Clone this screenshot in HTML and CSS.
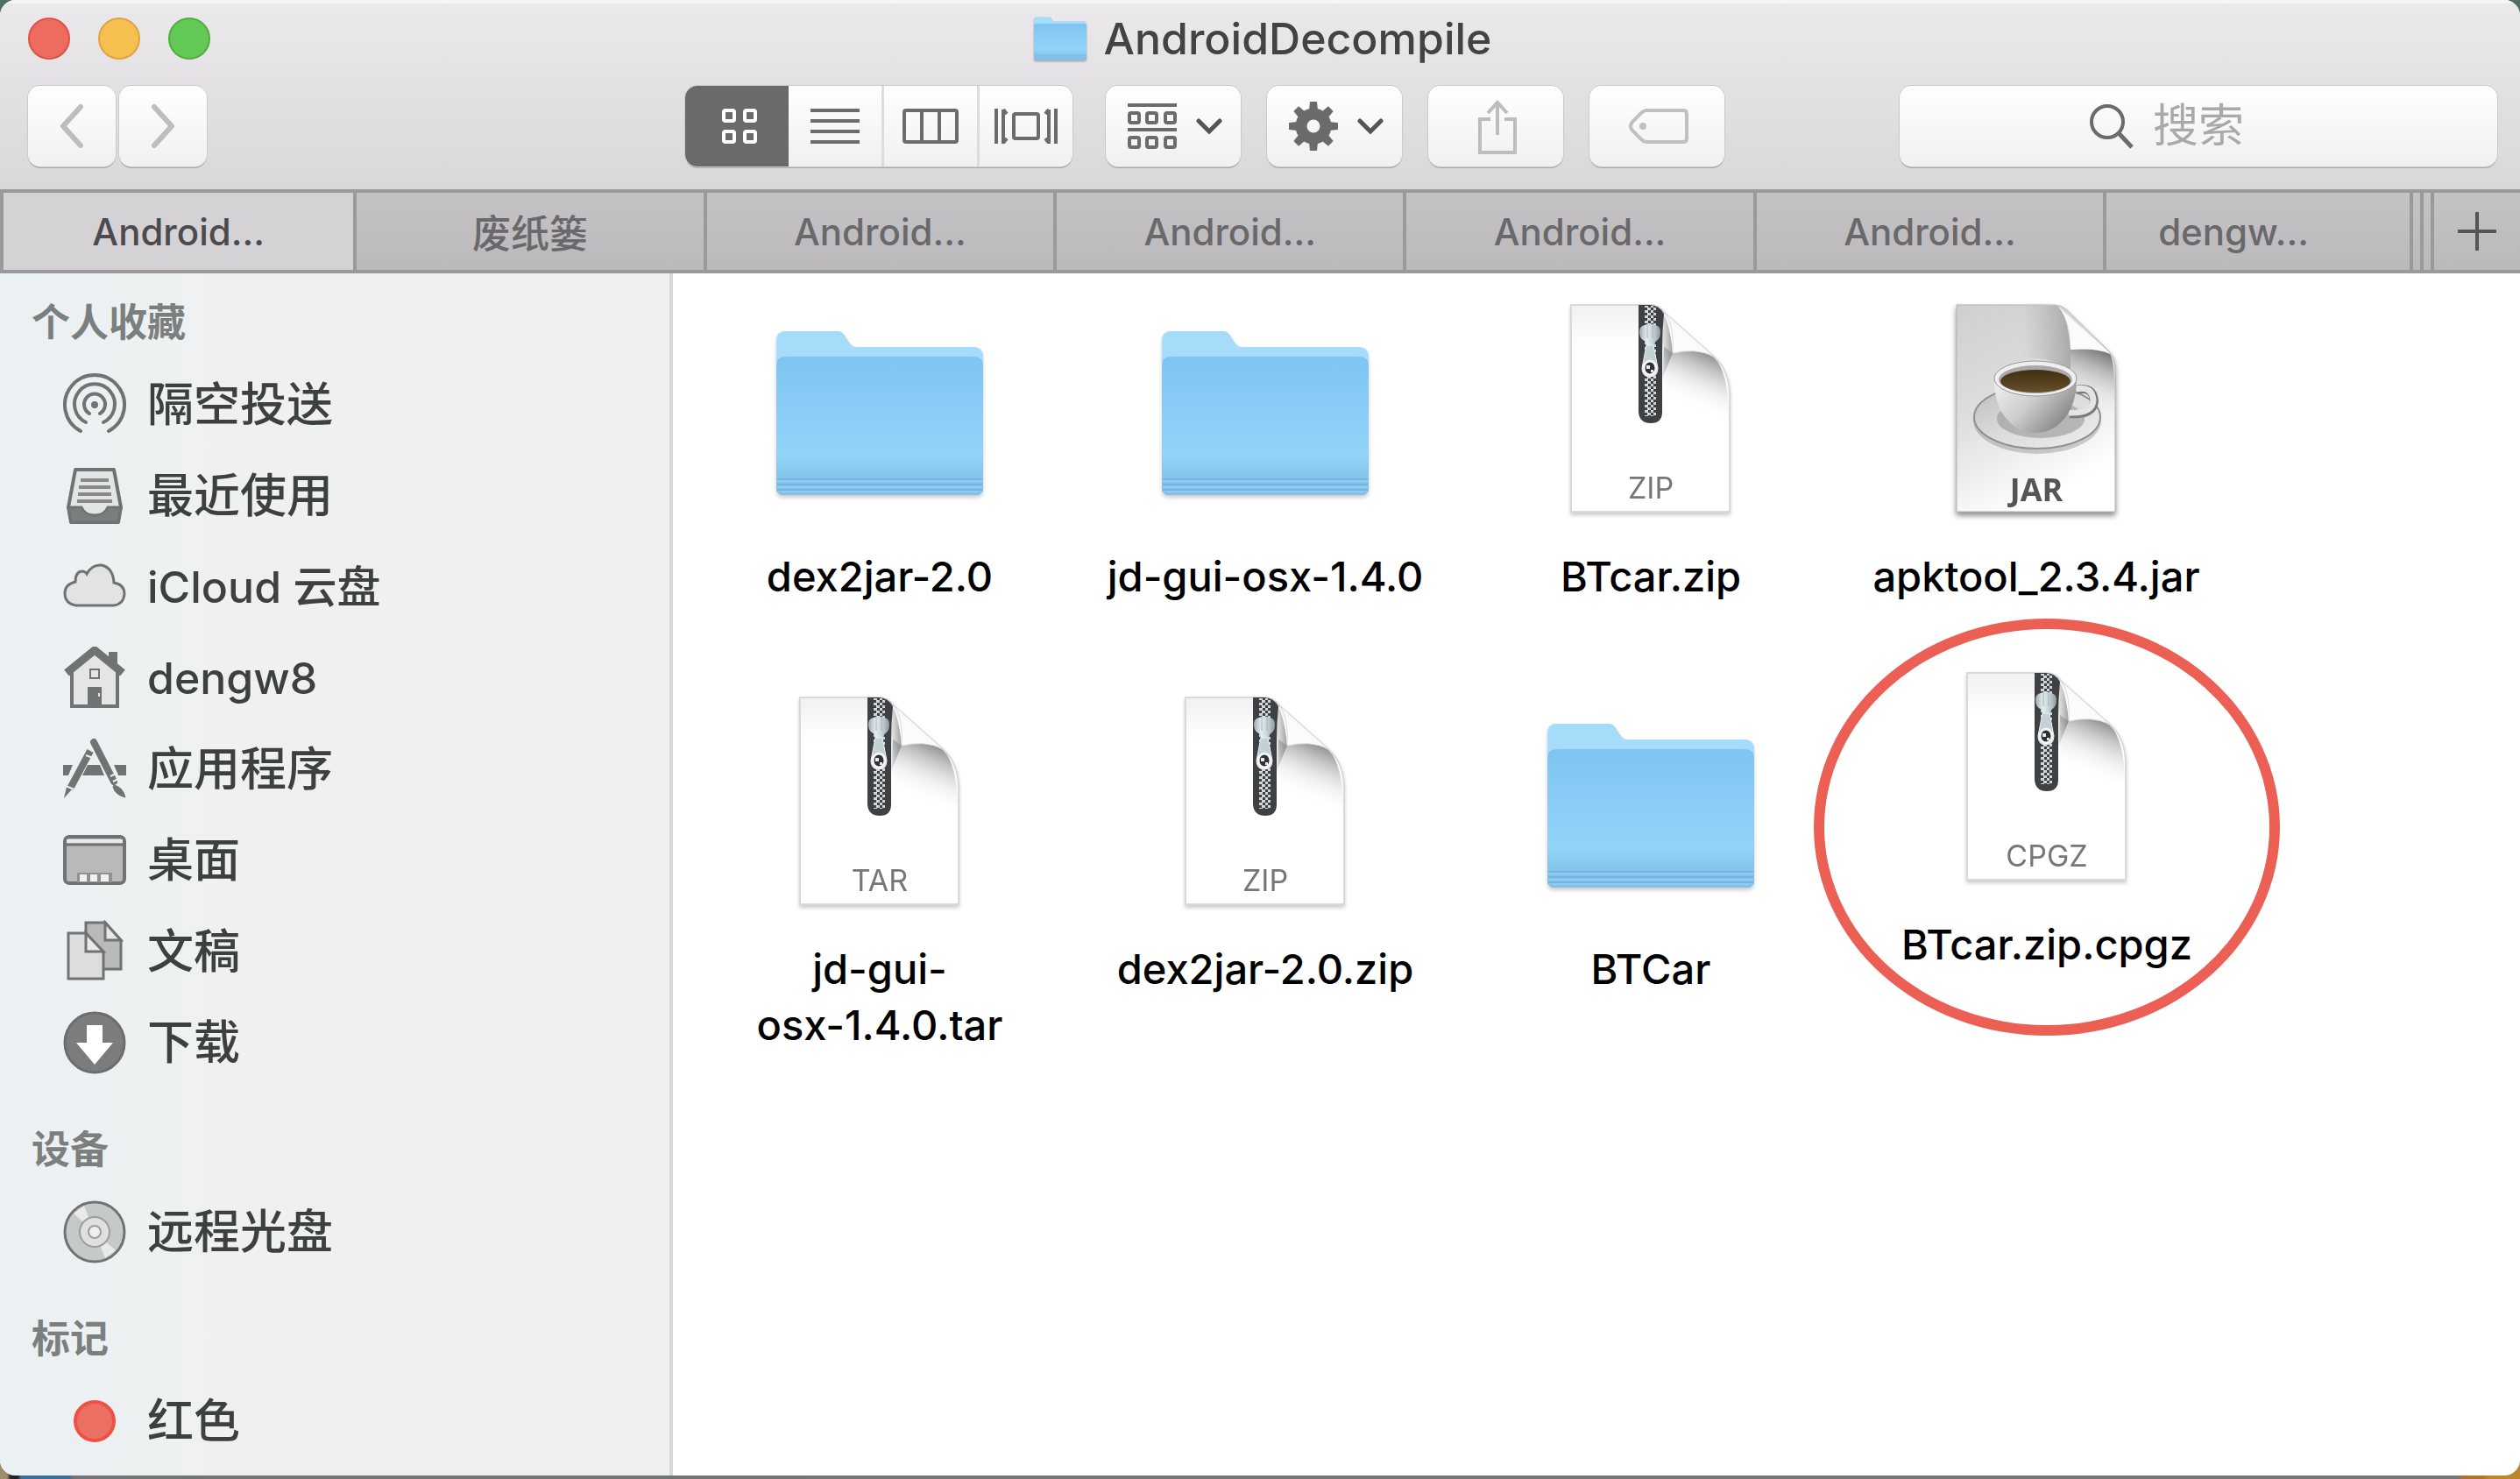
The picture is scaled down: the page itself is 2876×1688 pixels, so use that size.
FILE: index.html
```html
<!DOCTYPE html>
<html lang="zh-CN">
<head>
<meta charset="utf-8">
<title>AndroidDecompile</title>
<link rel="stylesheet" href="styles.css">
</head>
<body>
<svg class="defs" aria-hidden="true">
  <defs>
    <linearGradient id="folder-front" x1="0" y1="0" x2="0" y2="1">
      <stop offset="0" stop-color="#7fc5f2"/><stop offset=".4" stop-color="#8acdf7"/>
      <stop offset=".72" stop-color="#91d4f7"/><stop offset=".86" stop-color="#86c6ec"/><stop offset="1" stop-color="#82c0e8"/>
    </linearGradient>
    <linearGradient id="page-shade" x1="0" y1="0" x2="0" y2="1">
      <stop offset="0" stop-color="#f1f1f1"/><stop offset=".2" stop-color="#fff"/>
    </linearGradient>
    <linearGradient id="jar-page" x1="0" y1="0" x2=".4" y2="1">
      <stop offset="0" stop-color="#cfcfcf"/><stop offset=".5" stop-color="#dedede"/><stop offset="1" stop-color="#fff"/>
    </linearGradient>
    <linearGradient id="curl-shade" gradientUnits="userSpaceOnUse" x1="158" y1="50" x2="130" y2="116">
      <stop offset="0" stop-color="#7c7c7c"/><stop offset=".3" stop-color="#b4b4b4" stop-opacity=".8"/><stop offset=".6" stop-color="#ddd" stop-opacity=".5"/><stop offset="1" stop-color="#fff" stop-opacity="0"/>
    </linearGradient>
    <linearGradient id="side-shade" x1="0" y1="0" x2="1" y2="0">
      <stop offset="0" stop-color="#888" stop-opacity="0"/><stop offset="1" stop-color="#777" stop-opacity=".7"/>
    </linearGradient>
    <linearGradient id="curl-paper" x1="0" y1="1" x2="1" y2="0">
      <stop offset="0" stop-color="#fff"/><stop offset=".5" stop-color="#fafafa"/><stop offset="1" stop-color="#d0d0d0"/>
    </linearGradient>
    <linearGradient id="metal" x1="0" y1="0" x2="1" y2="0">
      <stop offset="0" stop-color="#9eabb1"/><stop offset=".35" stop-color="#e4edf0"/><stop offset=".65" stop-color="#c5d3d9"/><stop offset="1" stop-color="#8f9ba1"/>
    </linearGradient>
    <linearGradient id="cup-body" x1="0" y1="0" x2="1" y2=".6">
      <stop offset="0" stop-color="#f1f1f1"/><stop offset=".5" stop-color="#cfcfcf"/><stop offset="1" stop-color="#858585"/>
    </linearGradient>
    <linearGradient id="saucer-fill" x1="0" y1="0" x2="1" y2="1">
      <stop offset="0" stop-color="#bdbdbd"/><stop offset=".5" stop-color="#dcdcdc"/><stop offset="1" stop-color="#eee"/>
    </linearGradient>
    <linearGradient id="coffee" x1="0" y1="0" x2="0" y2="1">
      <stop offset="0" stop-color="#3f2f12"/><stop offset="1" stop-color="#66502a"/>
    </linearGradient>
    <pattern id="teeth" width="16" height="6" patternUnits="userSpaceOnUse" x="83" y="0">
      <path d="M1 0h4v3h-4zM8 0h3v3h-3zM4 3h4v3h-4zM11 3h3v3h-3z" fill="#ced6d9"/>
    </pattern>
  </defs>
  <symbol id="folder" viewBox="0 0 256 256">
    <path d="M10 52q0-12 10-12h60q5 0 8 5l6 9q3 4 8 4h133q11 0 11 12v150H10z" fill="#a4dcfa"/>
    <path d="M10 80q0-11 11-11h214q11 0 11 11v139q0 8-8 8H18q-8 0-8-8z" fill="url(#folder-front)"/>
    <path d="M11 209h234M11 215h234M11 221h234" stroke="#72b3df" stroke-width="2"/>
    <path d="M11 211h234M11 218h234M12 223h232" stroke="#9bd2f1" stroke-width="1"/>
  </symbol>
  <symbol id="archive" viewBox="0 0 256 256">
    <g transform="translate(37 10)">
      <path d="M0 0H90Q101 0 108 10L162 58Q181 74 181 104V236H0z" fill="url(#page-shade)" stroke="#d9d9d9" stroke-width="2"/>
      <path d="M116 55Q146 48 163 60Q180 76 180 128L106 112V48z" fill="url(#curl-shade)"/>
      <path d="M100 4Q112 12 116 55L104 84V4z" fill="url(#side-shade)"/>
      <path d="M77 0h13q10 0 16 10q-2 20-2 40v72q0 13-13 13t-14-13z" fill="#3f4043"/>
      <path d="M83 1h15v126H83z" fill="url(#teeth)"/>
      <path d="M108 10L162 58Q142 49 116 55Q118 24 108 10z" fill="url(#curl-paper)" stroke="#ddd" stroke-width="1"/>
      <path d="M78 31q0-7 6-8q6-3 12 0q6 1 6 8q0 8-6 11l-1 6h-9l-1-6q-7-3-7-11z" fill="url(#metal)"/>
      <path d="M87 22v16M93 22v16" stroke="#a3b0b6" stroke-width="1"/>
      <path d="M86 46h8l5 26q0 10-9 10t-9-10z" fill="#c3d0d5" stroke="#eef3f5" stroke-width="1"/>
      <ellipse cx="90" cy="72" rx="7" ry="8" fill="#2f3033" stroke="#f4f6f7" stroke-width="3"/>
      <path d="M86 69h4v4h-4zM91 74h3v3h-3z" fill="#e6ebed"/>
    </g>
  </symbol>
  <symbol id="jar" viewBox="0 0 256 256">
    <g transform="translate(37 10)">
      <path d="M0 0H112Q120 0 126 6L174 53Q181 60 181 74V236H0z" fill="url(#jar-page)" stroke="#b5b5b5" stroke-width="1"/>
      <path d="M75 1H114Q126 6 130 51V75Q110 60 75 60z" fill="url(#side-shade)" opacity=".7"/>
      <path d="M130 51Q156 48 175 56Q181 62 181 128L130 100z" fill="url(#curl-shade)"/>
      <path d="M116 2L175 55Q160 49 130 51Q131 20 116 2z" fill="url(#curl-paper)"/>
      <ellipse cx="92" cy="132" rx="73" ry="38" fill="#777" opacity=".35"/>
      <ellipse cx="92" cy="128" rx="72" ry="36" fill="url(#saucer-fill)" stroke="#909090" stroke-width="2"/>
      <ellipse cx="96" cy="130" rx="50" ry="22" fill="#9d9d9d" opacity=".65"/>
      <path d="M136 97q20-5 21 13q-1 16-28 14" fill="none" stroke="#7b7b7b" stroke-width="10"/>
      <path d="M136 96q19-4 20 13q-1 15-28 14" fill="none" stroke="#e5e5e5" stroke-width="7"/>
      <path d="M43 84Q43 118 60 133Q72 146 90 146T120 133Q137 116 137 84z" fill="url(#cup-body)"/>
      <ellipse cx="90" cy="84" rx="47" ry="20" fill="#efefef" stroke="#999" stroke-width="1"/>
      <ellipse cx="90" cy="85" rx="42" ry="16" fill="#aaa"/>
      <ellipse cx="90" cy="87" rx="40" ry="13" fill="url(#coffee)"/>
    </g>
  </symbol>
  <symbol id="chevron-down" viewBox="0 0 30 18"><path d="M3 3l12 12L27 3" fill="none" stroke="#555" stroke-width="5" stroke-linecap="round"/></symbol>
</svg>

<main class="window">
  <header class="titlebar">
    <div class="title-row">
      <div class="lights">
        <button class="light light--close" aria-label="关闭"></button>
        <button class="light light--min" aria-label="最小化"></button>
        <button class="light light--zoom" aria-label="缩放"></button>
      </div>
      <h1 class="title">
        <svg class="title-icon" viewBox="10 38 236 192" preserveAspectRatio="none"><use href="#folder" width="256" height="256"/></svg>
        AndroidDecompile
      </h1>
    </div>
    <div class="toolbar">
      <div class="nav">
        <button class="btn nav-btn" aria-label="后退"><svg width="30" height="52" viewBox="0 0 30 52"><path d="M25 4L5 26l20 22" fill="none" stroke="#bdbdbd" stroke-width="6" stroke-linecap="round" stroke-linejoin="round"/></svg></button>
        <button class="btn nav-btn" aria-label="前进"><svg width="30" height="52" viewBox="0 0 30 52"><path d="M5 4l20 22L5 48" fill="none" stroke="#bdbdbd" stroke-width="6" stroke-linecap="round" stroke-linejoin="round"/></svg></button>
      </div>
      <div class="tools">
        <div class="views">
          <button class="view view--on" aria-label="图标"><svg width="40" height="40" viewBox="0 0 40 40"><g fill="none" stroke="#fff" stroke-width="4"><rect x="2" y="2" width="12" height="12" rx="2"/><rect x="26" y="2" width="12" height="12" rx="2"/><rect x="2" y="26" width="12" height="12" rx="2"/><rect x="26" y="26" width="12" height="12" rx="2"/></g></svg></button>
          <button class="view" aria-label="列表"><svg width="56" height="40" viewBox="0 0 56 40"><path d="M0 2h56M0 14h56M0 26h56M0 38h56" stroke="#6b6b6b" stroke-width="4"/></svg></button>
          <button class="view" aria-label="分栏"><svg width="64" height="40" viewBox="0 0 64 40"><path d="M22 2v36M42 2v36" stroke="#6b6b6b" stroke-width="4"/><rect x="2" y="2" width="60" height="36" rx="2" fill="none" stroke="#6b6b6b" stroke-width="4"/></svg></button>
          <button class="view" aria-label="封面流"><svg width="72" height="40" viewBox="0 0 72 40"><path d="M2 0v40M70 0v40M10 1v38l4-5M10 1l4 5M62 1v38l-4-5M62 1l-4 5" fill="none" stroke="#6b6b6b" stroke-width="4"/><rect x="22" y="6" width="28" height="28" rx="2" fill="none" stroke="#6b6b6b" stroke-width="4"/></svg></button>
        </div>
        <button class="btn tool" aria-label="分组方式">
          <svg width="56" height="52" viewBox="0 0 56 52"><path d="M0 2h56M0 30h56" stroke="#6b6b6b" stroke-width="4"/><g fill="none" stroke="#6b6b6b" stroke-width="4"><rect x="2" y="11" width="11" height="11" rx="2"/><rect x="22" y="11" width="11" height="11" rx="2"/><rect x="43" y="11" width="11" height="11" rx="2"/><rect x="2" y="39" width="11" height="11" rx="2"/><rect x="22" y="39" width="11" height="11" rx="2"/><rect x="43" y="39" width="11" height="11" rx="2"/></g></svg>
          <svg width="30" height="18"><use href="#chevron-down"/></svg>
        </button>
        <button class="btn tool" aria-label="操作">
          <svg width="56" height="56" viewBox="-28 -28 56 56"><g fill="#6b6b6b"><path id="tooth" d="M-5-18l1-10h8l1 10z"/><use href="#tooth" transform="rotate(45)"/><use href="#tooth" transform="rotate(90)"/><use href="#tooth" transform="rotate(135)"/><use href="#tooth" transform="rotate(180)"/><use href="#tooth" transform="rotate(225)"/><use href="#tooth" transform="rotate(270)"/><use href="#tooth" transform="rotate(315)"/></g><circle r="14" fill="none" stroke="#6b6b6b" stroke-width="13"/></svg>
          <svg width="30" height="18"><use href="#chevron-down"/></svg>
        </button>
        <button class="btn tool" aria-label="共享"><svg width="44" height="64" viewBox="0 0 44 64"><path d="M14 24H2v38h40V24H30M22 42V5M11 17L22 5l11 12" fill="none" stroke="#bdbdbd" stroke-width="4"/></svg></button>
        <button class="btn tool" aria-label="标记"><svg width="68" height="40" viewBox="0 0 68 40"><path d="M20 2h42q4 0 4 4v28q0 4-4 4H20q-3 0-6-3L4 25q-4-5 0-10L14 5q3-3 6-3z" fill="none" stroke="#c0c0c0" stroke-width="4"/><circle cx="16" cy="20" r="4" fill="#c0c0c0"/></svg></button>
      </div>
      <label class="btn search">
        <svg width="50" height="52" viewBox="0 0 50 52"><circle cx="20" cy="21" r="18" fill="none" stroke="#6b6b6b" stroke-width="4"/><path d="M33 34l15 16" stroke="#6b6b6b" stroke-width="5"/></svg>
        <input class="search-input" type="search" placeholder="搜索" aria-label="搜索">
      </label>
    </div>
  </header>

  <nav class="tabs">
    <button class="tab tab--on">Android...</button>
    <button class="tab tab--han">废纸篓</button>
    <button class="tab">Android...</button>
    <button class="tab">Android...</button>
    <button class="tab">Android...</button>
    <button class="tab">Android...</button>
    <button class="tab tab--last">dengw...</button>
    <span class="tab-edge"></span>
    <span class="tab-edge"></span>
    <button class="tab-add" aria-label="新建标签页"><svg width="44" height="44" viewBox="0 0 44 44"><path d="M22 0v44M0 22h44" stroke="#555" stroke-width="4"/></svg></button>
  </nav>

  <div class="body">
    <aside class="sidebar">
      <section class="group">
        <h2 class="group-name">个人收藏</h2>
        <a class="place" href="#"><svg class="place-icon" viewBox="0 0 72 72"><g fill="none" stroke="#6f7372" stroke-width="4" stroke-linecap="round"><path d="M20 66A34 34 0 1 1 52 66"/><path d="M26 56A23 23 0 1 1 46 56"/><path d="M30 46A12 12 0 1 1 42 46"/></g><circle cx="36" cy="36" r="4" fill="#6f7372"/></svg>隔空投送</a>
        <a class="place" href="#"><svg class="place-icon" viewBox="0 0 72 72"><path d="M14 6h44l8 43-3 17H9L6 49z" fill="#e2e5e5" stroke="#6f7372" stroke-width="4" stroke-linejoin="round"/><path d="M20 18h32M18 26h36M17 34h38M16 42h40" stroke="#878a89" stroke-width="4"/><path d="M6 49h15q4 9 15 9t15-9h15l-3 17H9z" fill="#7a7e7d" stroke="#6f7372" stroke-width="3"/></svg>最近使用</a>
        <a class="place place--latin" href="#"><svg class="place-icon" viewBox="0 0 72 72"><path d="M15 57Q2 55 2 43Q2 33 14 30Q14 18 22 18Q25 18 27 21Q33 10 44 11Q57 14 58 31Q70 33 70 44Q69 56 57 57z" fill="#e2e4e4" stroke="#6f7372" stroke-width="3"/></svg>iCloud 云盘</a>
        <a class="place place--latin" href="#"><svg class="place-icon" viewBox="0 0 72 72"><path d="M10 68V28L36 6l26 22v40z" fill="#e4e6e5" stroke="#6f7372" stroke-width="4"/><path d="M52 6h10v18L52 15z" fill="#6f7372"/><path d="M4 30L36 4l32 26" fill="none" stroke="#6f7372" stroke-width="9"/><path d="M28 46h16v22H28z" fill="#6f7372"/><path d="M41 53v4" stroke="#e4e6e5" stroke-width="2"/><rect x="31" y="26" width="10" height="10" fill="#e4e6e5" stroke="#6f7372" stroke-width="2"/></svg>dengw8</a>
        <a class="place" href="#"><svg class="place-icon" viewBox="0 0 72 72"><path d="M0 31h11l-5 12H0zM28 31h14l5 12H22zM58 31h14v12h-9z" fill="#6f7372"/><path d="M35 5L58 50" stroke="#6f7372" stroke-width="8" stroke-linecap="round"/><path d="M58 54q10 2 13 14-12-3-14-12z" fill="#6f7372" stroke="#6f7372"/><path d="M54 44l8-4M57 50l8-4" stroke="#eef0ef" stroke-width="2"/><path d="M31 15L8 58" stroke="#6f7372" stroke-width="8"/><path d="M4 56l6 3L1 69z" fill="#6f7372"/><path d="M26 20l8 3M3 55l10 4" stroke="#eef0ef" stroke-width="2"/></svg>应用程序</a>
        <a class="place" href="#"><svg class="place-icon" viewBox="0 0 72 72"><rect x="2" y="9" width="68" height="53" rx="5" fill="#b7bab9" stroke="#6f7372" stroke-width="4"/><path d="M4 12h64v4H4z" fill="#e8eaea"/><path d="M2 18h68" stroke="#6f7372" stroke-width="3"/><path d="M16 50h40v11H16z" fill="#8f9291"/><path d="M19 52h8v8h-8zM31 52h8v8h-8zM43 52h9v8h-9z" fill="#f0f1f1"/></svg>桌面</a>
        <a class="place" href="#"><svg class="place-icon" viewBox="0 0 72 72"><g stroke="#6f7372" stroke-width="3"><path d="M26 3h22l18 20v33H26z" fill="#b7bab9"/><path d="M48 3v20h18z" fill="#e6e8e8"/><path d="M6 15h20l20 22v30H6z" fill="#dcdedd"/><path d="M26 15v21h20z" fill="#e9ebeb"/></g></svg>文稿</a>
        <a class="place" href="#"><svg class="place-icon" viewBox="0 0 72 72"><circle cx="36" cy="36" r="34" fill="#7b7c7d" stroke="#6c6e6e" stroke-width="3"/><path d="M27 16h18v20h12L36 61 15 36h12z" fill="#fff"/></svg>下载</a>
      </section>
      <section class="group">
        <h2 class="group-name">设备</h2>
        <a class="place" href="#"><svg class="place-icon" viewBox="0 0 72 72"><circle cx="36" cy="36" r="34" fill="#c6c9c9" stroke="#6f7372" stroke-width="3"/><path d="M36 36L12 15l12-9zM36 36l24 21-12 9z" fill="#e8eaea"/><circle cx="36" cy="36" r="17" fill="#dfe1e1" stroke="#9b9e9d" stroke-width="2"/><circle cx="36" cy="36" r="7" fill="#eef0f0" stroke="#9b9e9d" stroke-width="2"/></svg>远程光盘</a>
      </section>
      <section class="group">
        <h2 class="group-name">标记</h2>
        <a class="place" href="#"><svg class="place-icon" viewBox="0 0 72 72"><circle cx="36" cy="36" r="22" fill="#ec6f63" stroke="#ec5142" stroke-width="4"/></svg>红色</a>
      </section>
    </aside>

    <section class="files">
      <figure class="file"><svg class="file-icon" viewBox="0 0 256 256"><use href="#folder"/></svg><figcaption class="file-name">dex2jar-2.0</figcaption></figure>
      <figure class="file"><svg class="file-icon" viewBox="0 0 256 256"><use href="#folder"/></svg><figcaption class="file-name">jd-gui-osx-1.4.0</figcaption></figure>
      <figure class="file"><svg class="file-icon" viewBox="0 0 256 256"><use href="#archive"/><text class="kind" x="128" y="231">ZIP</text></svg><figcaption class="file-name">BTcar.zip</figcaption></figure>
      <figure class="file"><svg class="file-icon file-icon--jar" viewBox="0 0 256 256"><use href="#jar"/><text class="kind kind--jar" x="128" y="234">JAR</text></svg><figcaption class="file-name">apktool_2.3.4.jar</figcaption></figure>
      <figure class="file"><svg class="file-icon" viewBox="0 0 256 256"><use href="#archive"/><text class="kind" x="128" y="231">TAR</text></svg><figcaption class="file-name">jd-gui-<br>osx-1.4.0.tar</figcaption></figure>
      <figure class="file"><svg class="file-icon" viewBox="0 0 256 256"><use href="#archive"/><text class="kind" x="128" y="231">ZIP</text></svg><figcaption class="file-name">dex2jar-2.0.zip</figcaption></figure>
      <figure class="file"><svg class="file-icon" viewBox="0 0 256 256"><use href="#folder"/></svg><figcaption class="file-name">BTCar</figcaption></figure>
      <figure class="file file--marked"><svg class="file-icon" viewBox="0 0 256 256"><use href="#archive"/><text class="kind" x="128" y="231">CPGZ</text></svg><figcaption class="file-name">BTcar.zip.cpgz</figcaption><span class="ring"></span></figure>
    </section>
  </div>
</main>
</body>
</html>
```
FILE: styles.css
```css
* { box-sizing: border-box; }

body {
  margin: 0;
  height: 100vh;
  padding-bottom: 4px;
  overflow: hidden;
  display: flex;
  font-family: Inter, "Noto Sans CJK SC", sans-serif;
  color: #3c4040;
  background:
    linear-gradient(#4f7068 50%, transparent 50%),
    linear-gradient(to right, #a08c68 8px, #222 12px 20px, #3c6f98 24px 78px, #757475 84px, #757577 2804px, #b0722c 2812px 2834px, #bb862c 2840px);
}

button {
  margin: 0;
  padding: 0;
  border: 0;
  font: inherit;
  color: inherit;
  background: none;
}

svg { display: block; flex: none; }

.defs { position: absolute; width: 0; height: 0; }

.window {
  flex: 1;
  min-width: 0;
  display: flex;
  flex-direction: column;
  overflow: hidden;
  border-radius: 18px;
  background: #fff;
}

/* Title bar */
.titlebar {
  padding: 10px 26px 26px 32px;
  box-shadow: inset 0 4px #f6f5f6;
  background: linear-gradient(#ebe9ec, #d9d7d9);
}

.title-row {
  display: grid;
  grid-template-columns: 1fr auto 1fr;
  align-items: center;
  height: 68px;
  margin-bottom: 20px;
}

.lights { display: flex; gap: 32px; }

.light {
  width: 48px;
  height: 48px;
  border: 2px solid #dd5145;
  border-radius: 50%;
  background: #ed6b5f;
}
.light--min { border-color: #dda33c; background: #f5c04f; }
.light--zoom { border-color: #4fae3c; background: #62c856; }

.title {
  display: flex;
  align-items: center;
  gap: 20px;
  margin: 0;
  font-size: 50px;
  line-height: 68px;
  font-weight: 500;
  color: #434244;
}

.title-icon { width: 60px; height: 50px; filter: drop-shadow(0 2px 1px #0004); }

.toolbar {
  display: grid;
  grid-template-columns: 750fr auto 881fr;
  align-items: center;
}

.nav { display: flex; gap: 4px; }
.tools { display: flex; gap: 30px; }

.btn,
.views {
  height: 92px;
  border-radius: 14px;
  background: linear-gradient(#fff, #f0f0f0);
  box-shadow: 0 0 0 1px #cbc9cb, 0 2px 0 #aaa8aa;
}

.btn {
  display: flex;
  align-items: center;
  justify-content: center;
}

.nav-btn { width: 100px; }

.views {
  display: flex;
  width: 442px;
  margin-right: 8px;
  overflow: hidden;
}

.view {
  flex: 1;
  display: flex;
  align-items: center;
  justify-content: center;
  border-left: 3px solid #dcdcdc;
}
.view--on {
  flex: 0 0 118px;
  padding-left: 6px;
  border: 0;
  background: #6a6a6a;
}
.view--on + .view { border-left: 0; }

.tool { width: 154px; gap: 22px; padding-left: 4px; }

.search {
  justify-self: end;
  width: 682px;
  gap: 22px;
}

.search-input {
  width: 176px;
  padding: 0;
  border: 0;
  outline: 0;
  background: none;
  font: inherit;
  font-size: 52px;
  line-height: 68px;
}
.search-input::placeholder { color: #a9a9a9; opacity: 1; }

/* Tabs */
.tabs {
  display: flex;
  height: 96px;
  border: solid #9b9a9b;
  border-width: 4px 0;
  background: linear-gradient(#c4c2c4, #bbb9bb);
  font-size: 42px;
  font-weight: 500;
  color: #69686a;
}

.tab {
  flex: 400 1 0;
  border-right: 4px solid #9b9a9b;
}
.tab--on {
  flex-grow: 404;
  border-left: 4px solid #9b9a9b;
  color: #4b4a4c;
  background: #d4d2d5;
}
.tab--han { font-size: 44px; }
.tab--last { flex-grow: 350; text-indent: -56px; }
.tab-edge { width: 12px; border-right: 4px solid #9b9a9b; }

.tab-add {
  display: flex;
  align-items: center;
  justify-content: center;
  width: 98px;
}

/* Sidebar */
.body { flex: 1; display: flex; min-height: 0; }

.sidebar {
  flex: none;
  width: 768px;
  padding-left: 36px;
  border-right: 4px solid #d6d9d9;
  background: linear-gradient(to right, #ebf0f3, #eff1f1 260px);
}

.group-name {
  margin: 0;
  padding: 44px 0 16px;
  font-size: 44px;
  line-height: 52px;
  font-weight: 700;
  color: #7b7f7e;
}
.group:first-child .group-name { padding-top: 30px; }

.place {
  display: flex;
  align-items: center;
  gap: 24px;
  height: 104px;
  padding-left: 36px;
  font-size: 53px;
  line-height: 68px;
  font-weight: 500;
  color: inherit;
  text-decoration: none;
}
.place--latin { font-size: 50px; }

.place-icon { width: 72px; height: 72px; }

/* Files */
.files {
  flex: 1;
  display: grid;
  grid-template-columns: repeat(auto-fill, 440px);
  grid-auto-rows: 448px;
  padding: 26px 0 0 16px;
}

.file {
  position: relative;
  display: flex;
  flex-direction: column;
  align-items: center;
  gap: 32px;
  margin: 0;
}

/* Dragged off its grid cell */
.file--marked { margin: -28px 0 0 24px; }

.file-icon {
  width: 256px;
  height: 256px;
  filter: drop-shadow(0 3px 2px #0003);
}
.file-icon--jar { filter: drop-shadow(0 4px 3px #0007); }

.file-name {
  font-size: 47px;
  line-height: 64px;
  font-weight: 500;
  text-align: center;
  white-space: nowrap;
  color: #000;
}

.kind {
  font-size: 34px;
  text-anchor: middle;
  fill: #777;
}
.kind--jar {
  font-family: "Open Sans", sans-serif;
  font-weight: 700;
  font-size: 36px;
  fill: #555;
}

.ring {
  position: absolute;
  top: -52px;
  left: calc(50% - 266px);
  width: 532px;
  height: 476px;
  border: 12px solid #ec5f55;
  border-radius: 50%;
}
```
